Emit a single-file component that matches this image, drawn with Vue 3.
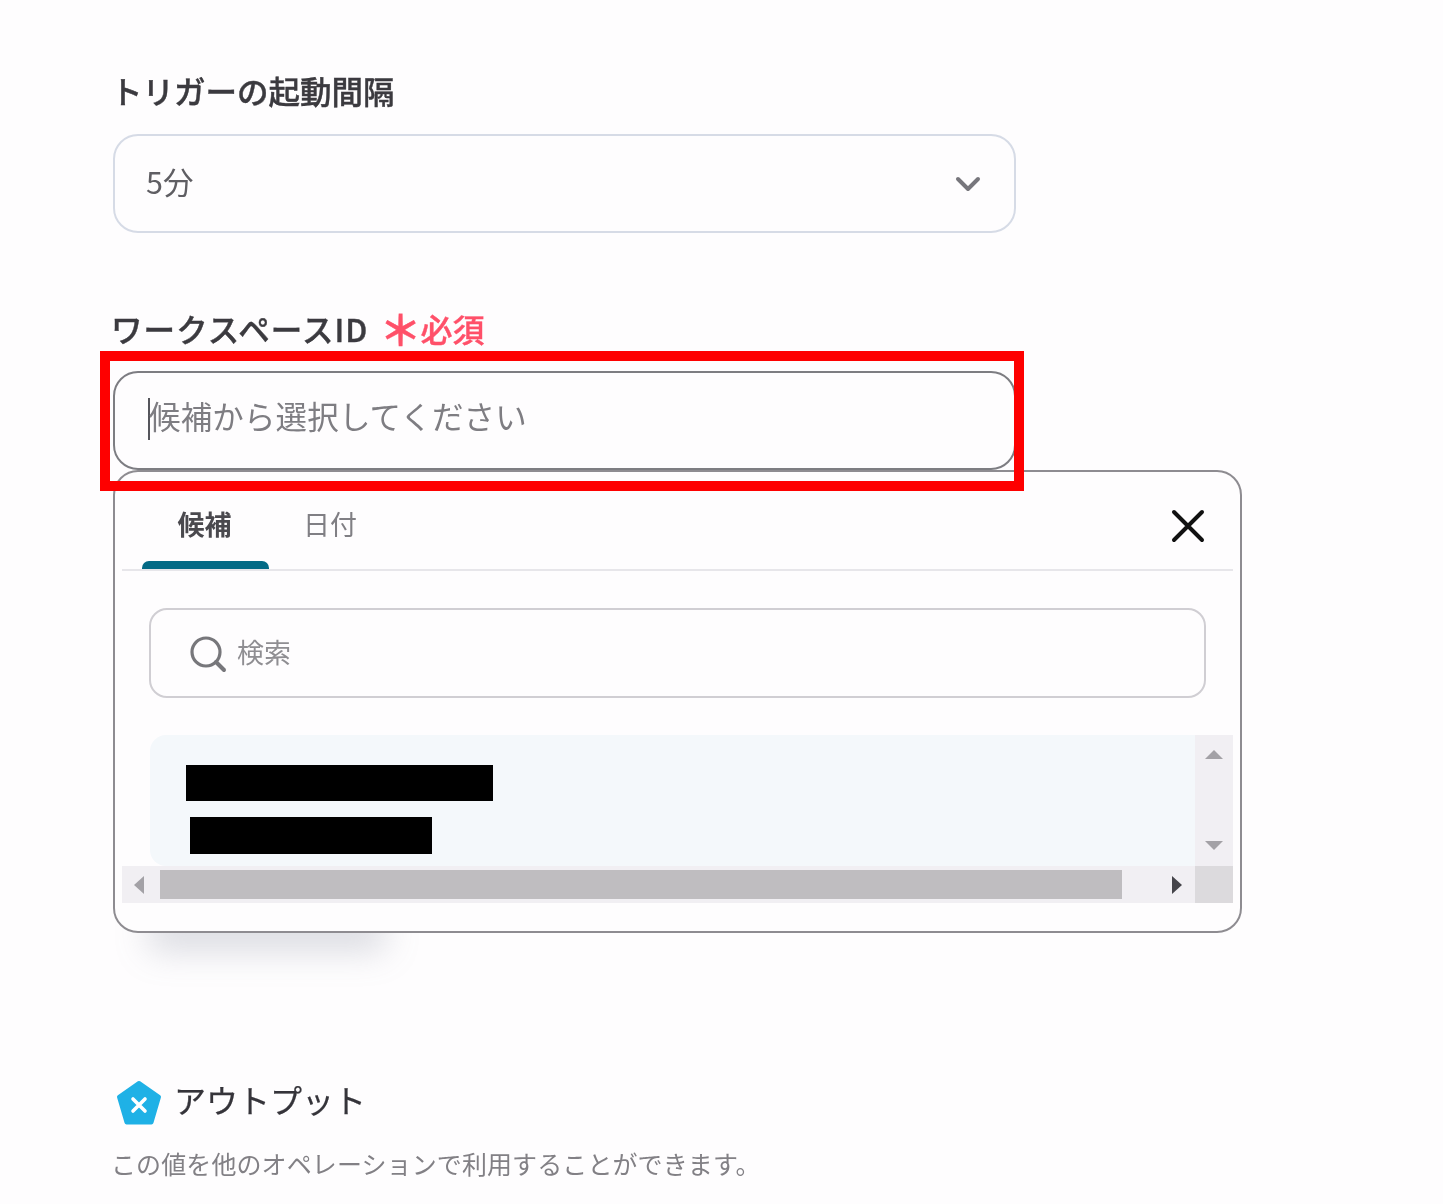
<script setup>
const tabs = [
  { label: '候補', active: true },
  { label: '日付', active: false }
]
</script>

<template>
  <main class="page">
    <section class="interval">
      <h2 class="label">トリガーの起動間隔</h2>
      <div class="select">
        <span class="select-value">5分</span>
        <svg class="chevron" width="26" height="18" viewBox="0 0 26 18" fill="none">
          <path d="M3 4l10 10L23 4" stroke="#77767c" stroke-width="4" stroke-linecap="round" stroke-linejoin="round" />
        </svg>
      </div>
    </section>

    <section class="workspace">
      <div class="label-row">
        <h2 class="label label-id">ワークスペースID</h2>
        <span class="required"><span class="star">＊</span>必須</span>
      </div>
      <div class="field">
        <div class="input">
          <span class="caret"></span>
          <span class="placeholder">候補から選択してください</span>
        </div>
        <div class="highlight"></div>
        <div class="popup-shadow"></div>

        <div class="popup">
          <div class="tabs">
            <div v-for="tab in tabs" :key="tab.label" class="tab" :class="{ active: tab.active }">{{ tab.label }}</div>
            <svg class="close" width="36" height="36" viewBox="0 0 36 36" fill="none">
              <path d="M4 4l28 28M32 4L4 32" stroke="#111" stroke-width="4" stroke-linecap="round" />
            </svg>
          </div>

          <div class="search">
            <svg width="38" height="38" viewBox="0 0 38 38" fill="none">
              <circle cx="17" cy="17" r="14" stroke="#77777b" stroke-width="3.2" />
              <path d="M27 27l8 8" stroke="#77777b" stroke-width="4" stroke-linecap="round" />
            </svg>
            <span class="search-text">検索</span>
          </div>

          <div class="list">
            <div class="options">
              <div class="mask mask-a"></div>
              <div class="mask mask-b"></div>
            </div>
            <div class="v-track">
              <span class="arrow up"></span>
              <span class="arrow down"></span>
            </div>
            <div class="h-track">
              <span class="arrow left"></span>
              <div class="thumb"></div>
              <span class="arrow right"></span>
            </div>
            <div class="corner"></div>
          </div>
        </div>
      </div>
    </section>

    <section class="output">
      <div class="output-head">
        <svg class="output-icon" width="46" height="46" viewBox="0 0 46 46">
          <path d="M23 3L43 17L35.5 42.5H10.5L3 17Z" fill="#1fb1e6" stroke="#1fb1e6" stroke-width="4" stroke-linejoin="round" />
          <path d="M17 19l12 12M29 19L17 31" stroke="#fff" stroke-width="3.6" stroke-linecap="round" />
        </svg>
        <h2 class="output-title">アウトプット</h2>
      </div>
      <p class="output-desc">この値を他のオペレーションで利用することができます。</p>
    </section>
  </main>
</template>

<style>
html, body { background: #fefdfe; }
</style>

<style scoped>
.page {
  box-sizing: border-box;
  width: 1443px;
  height: 1204px;
  padding: 69px 0 0 113px;
  overflow: hidden;
  background: #fefdfe;
  font-family: "Noto Sans CJK JP", "Noto Sans", sans-serif;
  filter: blur(0.6px);
}
.label {
  margin: 0 0 0 -2px;
  font-size: 31.5px;
  line-height: 42px;
  font-weight: 500;
  -webkit-text-stroke: 0.4px #3b3a3f;
  color: #3b3a3f;
}
.label-id {
  letter-spacing: 1.1px;
}
.select {
  box-sizing: border-box;
  width: 903px;
  height: 99px;
  margin-top: 23px;
  padding: 0 33px 0 31px;
  display: flex;
  align-items: center;
  justify-content: space-between;
  border: 2px solid #d6dbe6;
  border-radius: 25px;
}
.select-value {
  padding-bottom: 5px;
  font-size: 30.5px;
  line-height: 44px;
  color: #5f5e63;
}
.workspace {
  margin-top: 74px;
}
.label-row {
  display: flex;
  align-items: center;
  gap: 17px;
  height: 42px;
}
.required {
  display: flex;
  align-items: center;
  font-size: 32px;
  font-weight: 500;
  -webkit-text-stroke: 0.4px #ff5069;
  color: #ff5069;
}
.star {
  width: 36px;
  margin-left: -6px;
  margin-right: 5px;
  font-size: 42px;
  font-weight: 700;
  line-height: 42px;
}
.field {
  position: relative;
  margin-top: 22px;
  width: 903px;
}
.input {
  box-sizing: border-box;
  height: 99px;
  padding: 0 0 7px 33px;
  display: flex;
  align-items: center;
  border: 2.5px solid #7d7d82;
  border-radius: 25px;
  background: #fefdfe;
}
.caret {
  width: 2px;
  height: 42px;
  margin-top: 3px;
  background: #55555c;
}
.placeholder {
  margin: -4px 0 0 -1px;
  font-size: 31.5px;
  line-height: 44px;
  letter-spacing: 0.15px;
  color: #7e7d82;
}
.highlight {
  position: absolute;
  z-index: 2;
  left: -13px;
  top: -20px;
  width: 924px;
  height: 140px;
  box-sizing: border-box;
  border: 10px solid #fe0000;
  pointer-events: none;
}
.popup-shadow {
  position: absolute;
  left: 30px;
  top: 520px;
  width: 236px;
  height: 40px;
  box-shadow: 6px 20px 34px 0 rgba(125, 132, 150, 0.28);
}
.popup {
  position: absolute;
  z-index: 1;
  left: 0;
  top: 99px;
  box-sizing: border-box;
  width: 1129px;
  height: 463px;
  padding: 0 7px;
  border: 2.5px solid #8e8c91;
  border-radius: 25px;
  background: #fefdfe;
}
.tabs {
  position: relative;
  display: flex;
  box-sizing: border-box;
  height: 99px;
  padding-left: 20px;
  border-bottom: 2px solid #e7e6ea;
}
.tab {
  position: relative;
  box-sizing: border-box;
  width: 127px;
  height: 97px;
  padding: 32px 5px 0 0;
  text-align: center;
  font-size: 27px;
  line-height: 40px;
  color: #807f84;
}
.tab.active {
  padding-right: 2px;
  font-weight: 700;
  color: #4a494e;
}
.tab.active::after {
  content: "";
  position: absolute;
  left: 0;
  right: 0;
  bottom: 0;
  height: 8px;
  background: #036a85;
  border-radius: 7px 7px 0 0;
}
.close {
  position: absolute;
  right: 27px;
  top: 36px;
}
.search {
  box-sizing: border-box;
  height: 90px;
  margin: 37px 27px 0 27px;
  padding-left: 38px;
  display: flex;
  align-items: center;
  gap: 10px;
  border: 2px solid #d0ced3;
  border-radius: 18px;
}
.search svg {
  margin-top: 1px;
}
.search-text {
  margin-top: -3px;
  font-size: 27px;
  line-height: 40px;
  color: #8f8e92;
}
.list {
  display: grid;
  grid-template-columns: 1073px 38px;
  grid-template-rows: 131px 37px;
  margin-top: 37px;
}
.options {
  display: flex;
  flex-direction: column;
  margin-left: 28px;
  padding: 30px 0 0 36px;
  background: #f4f8fb;
  border-radius: 16px 0 0 16px;
}
.mask {
  background: #000;
}
.mask-a {
  width: 307px;
  height: 36px;
}
.mask-b {
  width: 242px;
  height: 37px;
  margin: 16px 0 0 4px;
}
.v-track {
  display: flex;
  flex-direction: column;
  align-items: center;
  justify-content: space-between;
  padding: 15px 0 16px;
  background: #f1eff3;
}
.h-track {
  display: flex;
  align-items: center;
  background: #f1eff3;
  padding-left: 12px;
}
.thumb {
  width: 962px;
  height: 29px;
  margin-left: 16px;
  background: #bfbdc0;
}
.corner {
  background: #dcdadd;
}
.arrow {
  width: 0;
  height: 0;
  border-style: solid;
  border-color: transparent;
}
.arrow.up {
  border-width: 0 9px 9px;
  border-bottom-color: #a3a1a6;
}
.arrow.down {
  border-width: 9px 9px 0;
  border-top-color: #a3a1a6;
}
.arrow.left {
  border-width: 9px 10px 9px 0;
  border-right-color: #a3a1a6;
}
.arrow.right {
  margin-left: 50px;
  border-width: 9px 0 9px 10px;
  border-left-color: #45444a;
}
.output {
  margin-top: 608px;
}
.output-head {
  display: flex;
  align-items: center;
  gap: 12px;
  margin-left: 4px;
}
.output-icon {
  margin: 2px 0 -2px -1px;
}
.output-title {
  margin: -2px 0 2px;
  font-size: 32px;
  line-height: 46px;
  font-weight: 400;
  -webkit-text-stroke: 0.25px #35343a;
  color: #35343a;
}
.output-desc {
  margin: 21px 0 0 -2px;
  font-size: 25px;
  line-height: 36px;
  letter-spacing: 0.1px;
  color: #828085;
}
</style>
